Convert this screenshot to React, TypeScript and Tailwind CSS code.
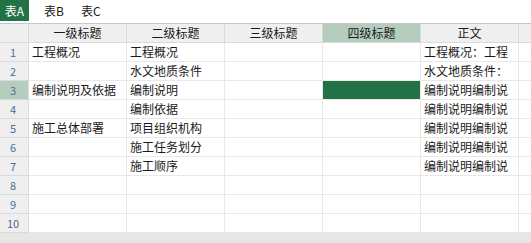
import React from "react";

const font = { fontFamily: '"Noto Sans CJK SC", "Liberation Sans", sans-serif' };

const headers = ["一级标题", "二级标题", "三级标题", "四级标题", "正文"];

const rows: string[][] = [
  ["工程概况", "工程概况", "", "", "工程概况：工程"],
  ["", "水文地质条件", "", "", "水文地质条件："],
  ["编制说明及依据", "编制说明", "", "", "编制说明编制说"],
  ["", "编制依据", "", "", "编制说明编制说"],
  ["施工总体部署", "项目组织机构", "", "", "编制说明编制说"],
  ["", "施工任务划分", "", "", "编制说明编制说"],
  ["", "施工顺序", "", "", "编制说明编制说"],
  ["", "", "", "", ""],
  ["", "", "", "", ""],
  ["", "", "", "", ""],
];

export default function App() {
  return (
    <div className="w-[531px] h-[243px] bg-white overflow-hidden flex flex-col text-[12px] text-[#1a1a1a]" style={font}>
      {/* sheet tabs */}
      <div className="h-[23px] flex items-start">
        <div className="h-[21px] w-[29px] bg-[#217346] text-white flex items-center justify-center">表A</div>
        <div className="h-[21px] ml-[15px] flex items-center">表B</div>
        <div className="h-[21px] ml-[17px] flex items-center">表C</div>
      </div>

      <div className="grid grid-cols-[29px_98px_98px_98px_98px_98px_12px] border-t border-[#c8c8c8]">
        {/* header row */}
        <div className="h-[19px] bg-[#efefef] border-r border-b border-[#dadada]" />
        {headers.map((h, i) => (
          <div
            key={h}
            className={
              "h-[19px] flex items-center justify-center border-r border-b border-[#dadada] " +
              (i === 3 ? "bg-[#b4cdbe]" : "bg-[#efefef]")
            }
          >
            {h}
          </div>
        ))}
        <div className="h-[19px] bg-[#efefef] border-b border-[#dadada]" />

        {rows.map((r, ri) => (
          <React.Fragment key={ri}>
            <div
              className={
                "h-[19px] flex items-center justify-center border-r border-b border-[#dadada] text-[#4b6e92] text-[11px] pr-[2px] " +
                (ri === 2 ? "bg-[#b4cdbe]" : "bg-[#efefef]")
              }
            >
              {ri + 1}
            </div>
            {r.map((c, ci) => (
              <div
                key={ci}
                className={
                  "h-[19px] flex items-center px-[3px] whitespace-nowrap overflow-hidden border-r border-b border-[#e8e8e8] " +
                  (ri === 2 && ci === 3 ? "bg-[#217346]" : "")
                }
              >
                {c}
              </div>
            ))}
            <div className="h-[19px] border-b border-[#e8e8e8]" />
          </React.Fragment>
        ))}
      </div>

      <div className="flex-1 bg-[#e6e6e6]" />
    </div>
  );
}
